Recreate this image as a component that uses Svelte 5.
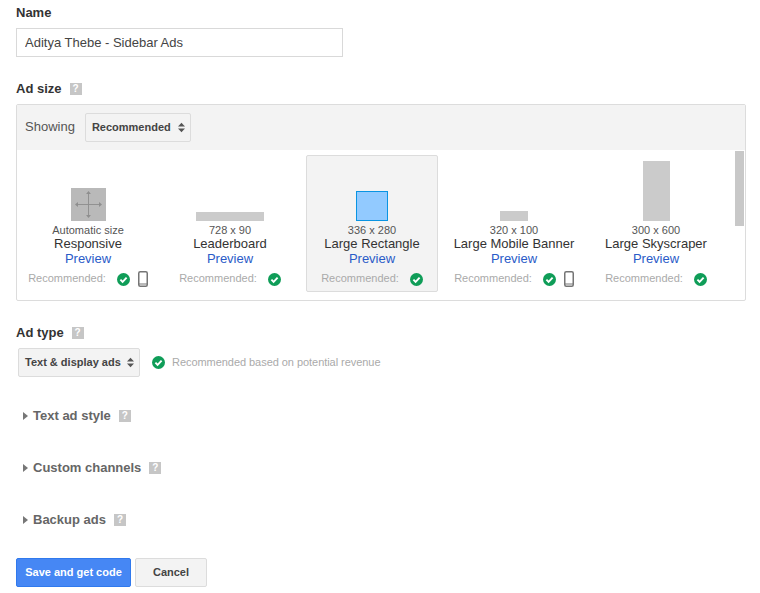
<script>
  const sizes = [
    { dim: "Automatic size", name: "Responsive", w: 35, h: 33, kind: "auto", phone: true },
    { dim: "728 x 90", name: "Leaderboard", w: 68, h: 9, kind: "plain" },
    { dim: "336 x 280", name: "Large Rectangle", w: 32, h: 30, kind: "active", selected: true },
    { dim: "320 x 100", name: "Large Mobile Banner", w: 28, h: 10, kind: "plain", phone: true },
    { dim: "300 x 600", name: "Large Skyscraper", w: 27, h: 60, kind: "plain" }
  ];
  const sections = ["Text ad style", "Custom channels", "Backup ads"];
</script>

{#snippet check()}
  <svg class="check" width="13" height="13" viewBox="0 0 13 13">
    <circle cx="6.5" cy="6.5" r="6.5" fill="#0f9d58" />
    <path d="M3.4 6.7l2.2 2.2 4-4.2" fill="none" stroke="#fff" stroke-width="1.9" />
  </svg>
{/snippet}

{#snippet help()}
  <span class="help">?</span>
{/snippet}

{#snippet updown()}
  <svg class="updown" width="7" height="11" viewBox="0 0 8 11">
    <path d="M4 0l4 4.4H0zM4 11L0 6.6h8z" fill="#555" />
  </svg>
{/snippet}

<main class="page">
  <label class="label name-label" for="ad-name">Name</label>
  <input id="ad-name" class="name" value="Aditya Thebe - Sidebar Ads" />

  <div class="label size-label">Ad size {@render help()}</div>
  <div class="panel">
    <div class="panel-head">
      <span class="showing">Showing</span>
      <div class="select rec"><span class="select-text">Recommended</span> {@render updown()}</div>
    </div>
    <div class="panel-body">
      <ul class="sizes">
        {#each sizes as size}
          <li class="size" class:selected={size.selected}>
            <div class="thumb-area">
              <div class="thumb {size.kind}" style="width: {size.w}px; height: {size.h}px">
                {#if size.kind === "auto"}
                  <svg width="27" height="27" viewBox="0 0 29 29">
                    <path d="M14.5 3v23M3 14.5h23" stroke="#8e8e8e" stroke-width="1" fill="none" />
                    <path d="M14.5 0l2.6 3.2h-5.2zM14.5 29l-2.6-3.2h5.2zM0 14.5l3.2-2.6v5.2zM29 14.5l-3.2 2.6v-5.2z" fill="#8e8e8e" />
                  </svg>
                {/if}
              </div>
            </div>
            <div class="dim">{size.dim}</div>
            <div class="size-name">{size.name}</div>
            <a class="preview" href="#preview">Preview</a>
            <div class="rec-row">
              <span class="rec-text">Recommended:</span>
              {@render check()}
              {#if size.phone}
                <svg class="phone" width="10" height="16" viewBox="0 0 10 16">
                  <rect x="0.75" y="0.75" width="8.5" height="14.5" rx="1.5" fill="none" stroke="#757575" stroke-width="1.5" />
                  <path d="M1 13h8" stroke="#757575" stroke-width="1" />
                </svg>
              {/if}
            </div>
          </li>
        {/each}
      </ul>
      <div class="scrollbar"></div>
    </div>
  </div>

  <div class="label type-label">Ad type {@render help()}</div>
  <div class="type-row">
    <div class="select type"><span class="select-text">Text &amp; display ads</span> {@render updown()}</div>
    {@render check()}
    <span class="type-note">Recommended based on potential revenue</span>
  </div>

  <div class="sections">
    {#each sections as section}
      <div class="section">
        <svg width="5" height="8" viewBox="0 0 5 8"><path d="M0 0l5 4-5 4z" fill="#777" /></svg>
        <span class="section-name">{section}</span>
        {@render help()}
      </div>
    {/each}
  </div>

  <div class="actions">
    <button class="btn save">Save and get code</button>
    <button class="btn cancel">Cancel</button>
  </div>
</main>

<style>
  :global(body) {
    margin: 0;
    background: #fff;
    font-family: "Liberation Sans", Arial, sans-serif;
    color: #333;
  }

  .page {
    box-sizing: border-box;
    width: 760px;
    height: 593px;
    padding: 5px 14px 0 16px;
    overflow: hidden;
  }

  .label {
    display: flex;
    align-items: center;
    gap: 8px;
    height: 15px;
    font-size: 13px;
    line-height: 15px;
    font-weight: bold;
    color: #333;
  }

  .name-label {
    margin-bottom: 8px;
  }

  .name {
    display: block;
    box-sizing: border-box;
    width: 327px;
    height: 29px;
    padding: 0 8px;
    border: 1px solid #d9d9d9;
    border-radius: 0;
    outline: none;
    font: 13px "Liberation Sans", Arial, sans-serif;
    color: #444;
  }

  .size-label {
    margin-top: 24px;
    margin-bottom: 8px;
  }

  .help {
    display: inline-block;
    width: 12px;
    height: 12px;
    background: #c6c6c6;
    color: #fff;
    font-size: 10px;
    line-height: 12px;
    font-weight: bold;
    text-align: center;
  }

  .panel {
    box-sizing: border-box;
    width: 730px;
    height: 197px;
    border: 1px solid #dcdcdc;
    border-radius: 2px;
  }

  .panel-head {
    display: flex;
    align-items: flex-start;
    gap: 10px;
    box-sizing: border-box;
    height: 45px;
    padding: 8px 8px 0;
    background: #f3f3f3;
  }

  .showing {
    font-size: 13px;
    line-height: 27px;
    color: #555;
  }

  .select {
    display: flex;
    align-items: center;
    justify-content: space-between;
    box-sizing: border-box;
    height: 29px;
    padding: 0 5px 0 6px;
    border: 1px solid #dcdcdc;
    border-radius: 2px;
    background: #f3f3f3;
    font-size: 11px;
    font-weight: bold;
    color: #444;
  }

  .select-text {
    margin-top: -2px;
  }

  .rec {
    width: 106px;
  }

  .type {
    width: 122px;
  }

  .panel-body {
    display: flex;
    justify-content: space-between;
    height: 150px;
  }

  .sizes {
    display: flex;
    gap: 10px;
    margin: 5px 0 0;
    padding: 0 0 0 5px;
    list-style: none;
  }

  .size {
    box-sizing: border-box;
    width: 132px;
    height: 137px;
    border: 1px solid transparent;
    border-radius: 2px;
    text-align: center;
  }

  .size.selected {
    border-color: #dcdcdc;
    background: #f3f3f3;
  }

  .thumb-area {
    display: flex;
    align-items: flex-end;
    justify-content: center;
    height: 65px;
  }

  .thumb {
    display: flex;
    align-items: center;
    justify-content: center;
    box-sizing: border-box;
    background: #cbcbcb;
  }

  .thumb.auto {
    background: #b9b9b9;
  }

  .thumb.active {
    border: 1px solid #0a94e2;
    background: #92caff;
  }

  .dim {
    margin-top: 3px;
    font-size: 11px;
    line-height: 13px;
    color: #555;
  }

  .size-name {
    margin-top: -1px;
    font-size: 13px;
    line-height: 15px;
    color: #333;
  }

  .preview {
    display: block;
    font-size: 13px;
    line-height: 15px;
    color: #2a5bc8;
    text-decoration: none;
  }

  .rec-row {
    display: flex;
    align-items: center;
    justify-content: center;
    gap: 11px;
    height: 16px;
    margin-top: 5px;
  }

  .rec-text {
    margin-top: -2px;
    font-size: 11px;
    color: #aaa;
  }

  .check {
    flex: none;
  }

  .phone {
    flex: none;
    margin-left: -3px;
  }

  .scrollbar {
    width: 9px;
    height: 75px;
    margin: 1px 1px 0 0;
    background: #c8c8c8;
  }

  .type-label {
    margin-top: 24px;
    margin-bottom: 8px;
  }

  .type-row {
    display: flex;
    align-items: center;
    padding-left: 2px;
  }

  .type-row .check {
    margin-left: 12px;
    margin-right: 7px;
  }

  .type-note {
    margin-top: -2px;
    font-size: 11px;
    letter-spacing: -0.05px;
    color: #aaa;
  }

  .sections {
    display: flex;
    flex-direction: column;
    gap: 37px;
    margin-top: 31px;
    padding-left: 7px;
  }

  .section {
    display: flex;
    align-items: center;
    height: 15px;
  }

  .section-name {
    margin: 0 8px 0 5px;
    font-size: 13px;
    font-weight: bold;
    line-height: 15px;
    color: #666;
  }

  .actions {
    display: flex;
    gap: 4px;
    margin-top: 31px;
  }

  .btn {
    box-sizing: border-box;
    height: 29px;
    padding: 0 0 2px;
    border-radius: 2px;
    font: bold 11px "Liberation Sans", Arial, sans-serif;
  }

  .save {
    width: 115px;
    border: 1px solid #3079ed;
    background: #4687f4;
    color: #fff;
  }

  .cancel {
    width: 72px;
    border: 1px solid #dcdcdc;
    background: #f3f3f3;
    color: #444;
  }
</style>
